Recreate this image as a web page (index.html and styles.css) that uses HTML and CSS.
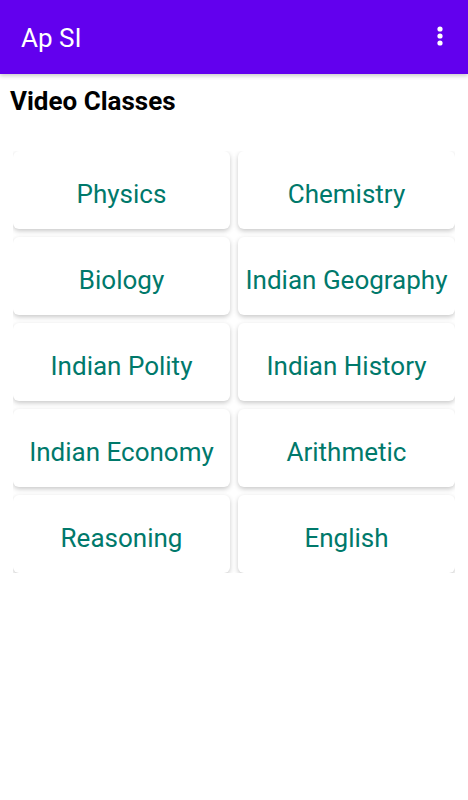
FILE: index.html
```html
<!DOCTYPE html>
<html lang="en">
<head>
    <meta charset="UTF-8">
    <title>Ap SI</title>
    <link rel="stylesheet" href="styles.css">
</head>
<body>
    <div class="appbar">
        <span class="appbar-title">Ap SI</span>
        <svg class="menu" width="8" height="24" viewBox="0 0 8 24">
            <circle cx="4" cy="5" r="2.6" fill="#fff"/>
            <circle cx="4" cy="12" r="2.6" fill="#fff"/>
            <circle cx="4" cy="19" r="2.6" fill="#fff"/>
        </svg>
    </div>
    <h1 class="heading">Video Classes</h1>
    <div class="grid">
        <div class="card">Physics</div>
        <div class="card">Chemistry</div>
        <div class="card">Biology</div>
        <div class="card">Indian Geography</div>
        <div class="card">Indian Polity</div>
        <div class="card">Indian History</div>
        <div class="card">Indian Economy</div>
        <div class="card">Arithmetic</div>
        <div class="card">Reasoning</div>
        <div class="card">English</div>
    </div>
</body>
</html>
```

FILE: styles.css
```css
body {
    margin: 0;
    font-family: Roboto, "Noto Sans", sans-serif;
    background: #fff;
    width: 468px;
    height: 800px;
    overflow: hidden;
}
.appbar {
    height: 74px;
    background: #6200ee;
    display: flex;
    align-items: center;
    justify-content: space-between;
    padding: 0 24px 0 21px;
    box-sizing: border-box;
    box-shadow: 0 2px 4px rgba(0,0,0,0.2);
    position: relative;
    z-index: 1;
}
.appbar-title {
    color: #fff;
    font-size: 26px;
    margin-top: 2px;
}
.menu {
    margin-top: -2px;
}
.heading {
    margin: 0;
    padding: 12px 0 0 10px;
    font-size: 26px;
    font-weight: bold;
    color: #000;
    line-height: 30px;
}
.grid {
    margin: 35px 13px 0;
    display: grid;
    grid-template-columns: 1fr 1fr;
    gap: 8px;
    overflow: hidden;
}
.card {
    height: 78px;
    box-sizing: border-box;
    padding-top: 8px;
    background: #fff;
    border-radius: 6px;
    box-shadow: 0 2px 5px rgba(0,0,0,0.22);
    display: flex;
    align-items: center;
    justify-content: center;
    color: #00796b;
    font-size: 26px;
    white-space: nowrap;
}
```
